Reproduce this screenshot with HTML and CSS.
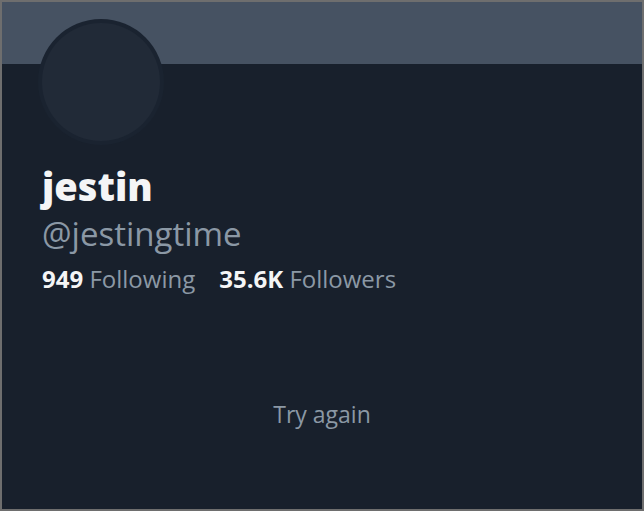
FILE: index.html
```html
<!DOCTYPE html>
<html>
<head>
<meta charset="utf-8">
<link rel="stylesheet" href="styles.css">
</head>
<body>
<div class="frame">
  <div class="banner"></div>
  <div class="profile">
    <div class="avatar"><div class="avatar-inner"></div></div>
    <div class="name">jestin</div>
    <div class="handle">@jestingtime</div>
    <div class="stats">
      <span class="stat"><b>949</b> Following</span>
      <span class="stat"><b>35.6K</b> Followers</span>
    </div>
  </div>
  <div class="retry">Try again</div>
</div>
</body>
</html>
```
FILE: styles.css
```css
html, body {
  margin: 0;
  padding: 0;
  background: #18202c;
}
.frame {
  box-sizing: border-box;
  width: 644px;
  height: 511px;
  border: 2px solid #6e6e6e;
  background: #18202c;
  font-family: "Open Sans", "Liberation Sans", Arial, sans-serif;
  overflow: hidden;
}
.banner {
  height: 62px;
  background: #465262;
}
.profile {
  padding-left: 40px;
}
.avatar {
  width: 126px;
  height: 126px;
  margin-top: -45px;
  margin-left: -4px;
  border-radius: 50%;
  background: #1a2330;
  display: flex;
  align-items: center;
  justify-content: center;
}
.avatar-inner {
  width: 118px;
  height: 118px;
  border-radius: 50%;
  background: #212a37;
}
.name {
  margin-top: 15px;
  font-size: 38px;
  line-height: 52px;
  font-weight: 800;
  color: #f4f5f6;
}
.handle {
  margin-top: 2px;
  font-size: 33px;
  line-height: 40px;
  color: #8b98a5;
}
.stats {
  margin-top: 10px;
  display: flex;
  gap: 24px;
  font-size: 24px;
  line-height: 30px;
  color: #8b98a5;
}
.stat b {
  color: #f4f5f6;
  font-weight: 700;
}
.retry {
  margin-top: 105px;
  text-align: center;
  font-size: 23px;
  line-height: 30px;
  color: #8b98a5;
}
```
